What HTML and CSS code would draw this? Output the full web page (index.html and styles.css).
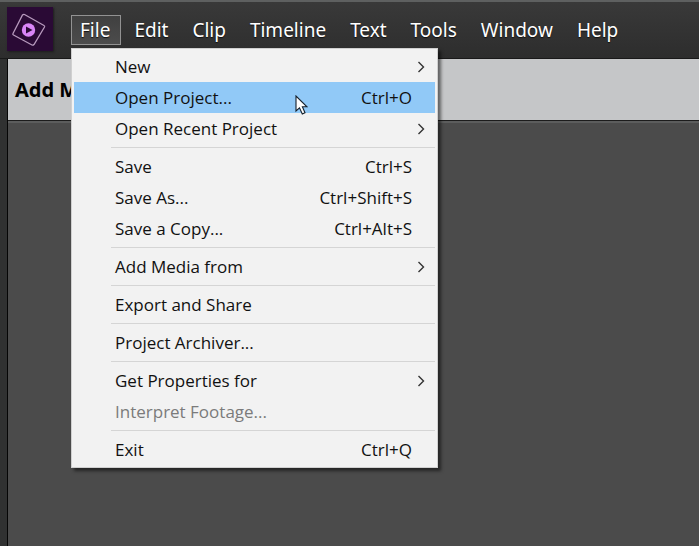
FILE: index.html
```
<!DOCTYPE html>
<html lang="en">
<head>
  <meta charset="UTF-8">
  <title>File menu</title>
  <link rel="stylesheet" href="styles.css">
</head>
<body>

<header class="topbar">
  <svg class="logo" viewBox="0 0 46 44" aria-hidden="true">
    <path d="M17.5 7.5L37 18.5Q38 19 37.5 20L27 37.5Q26 38.5 25 38L6.500 28Q5.500 27.500 6 26.500L15.500 8Q16.500 7 17.500 7.500Z" fill="none" stroke="#b79abd" stroke-width="1.300"/>
    <circle cx="21.500" cy="23" r="6.700" fill="#d985f7"/>
    <path d="M19 19.500L25.500 23L19 26.500Z" fill="#2a0a35"/>
  </svg>
  <nav class="menubar">
    <div class="menu-wrap">
      <button class="menu-title open">File</button>
      <!-- File drop-down -->
      <div class="menu">
        <button class="item"><span>New</span><svg class="arrow" viewBox="0 0 8 12"><path d="M1.500 1L6.500 6L1.500 11"/></svg></button>
        <button class="item active"><span>Open Project...</span><span>Ctrl+O</span></button>
        <button class="item"><span>Open Recent Project</span><svg class="arrow" viewBox="0 0 8 12"><path d="M1.500 1L6.500 6L1.500 11"/></svg></button>
        <hr class="line">
        <button class="item"><span>Save</span><span>Ctrl+S</span></button>
        <button class="item"><span>Save As...</span><span>Ctrl+Shift+S</span></button>
        <button class="item"><span>Save a Copy...</span><span>Ctrl+Alt+S</span></button>
        <hr class="line">
        <button class="item"><span>Add Media from</span><svg class="arrow" viewBox="0 0 8 12"><path d="M1.500 1L6.500 6L1.500 11"/></svg></button>
        <hr class="line">
        <button class="item"><span>Export and Share</span></button>
        <hr class="line">
        <button class="item"><span>Project Archiver...</span></button>
        <hr class="line">
        <button class="item"><span>Get Properties for</span><svg class="arrow" viewBox="0 0 8 12"><path d="M1.500 1L6.500 6L1.500 11"/></svg></button>
        <button class="item" disabled><span>Interpret Footage...</span></button>
        <hr class="line">
        <button class="item"><span>Exit</span><span>Ctrl+Q</span></button>
        <svg class="cursor" viewBox="0 0 13 20" aria-hidden="true"><path d="M1 1V16L4.500 12.800L7.300 19L10 17.800L7.400 11.800H12Z" fill="#fff" stroke="#16202c" stroke-width="1.100"/></svg>
      </div>
    </div>
    <button class="menu-title">Edit</button>
    <button class="menu-title">Clip</button>
    <button class="menu-title">Timeline</button>
    <button class="menu-title">Text</button>
    <button class="menu-title">Tools</button>
    <button class="menu-title">Window</button>
    <button class="menu-title">Help</button>
  </nav>
</header>

<main class="workspace">
  <div class="panel-bar">
    <button class="add-media">Add Media</button>
  </div>
</main>

</body>
</html>
```
FILE: styles.css
```
* {
  box-sizing: border-box;
}
body {
  margin: 0;
  min-height: 100vh;
  display: flex;
  flex-direction: column;
  background: #303131;
  font-family: "Open Sans", "Noto Sans", sans-serif;
}
button {
  margin: 0;
  padding: 0;
  border: none;
  background: none;
  font-family: inherit;
}
.topbar {
  display: flex;
  align-items: flex-start;
  height: 59px;
  padding: 5px 7px 0;
  border-top: 2px solid #5e6060;
  border-bottom: 1px solid #191919;
  background: linear-gradient(#393939, #2d2d2d);
}
.logo {
  width: 46px;
  height: 44px;
  margin-right: 18px;
  background: #2a0a35;
  box-shadow: 1px 1px 2px #1c1c1c;
}
.menubar {
  display: flex;
  gap: 4px;
  padding-top: 8px;
}
.menu-wrap {
  position: relative;
}
.menu-title {
  display: block;
  height: 30px;
  padding: 0 10px 0 8px;
  border: 1px solid transparent;
  color: #fff;
  font-family: "Noto Sans", sans-serif;
  font-size: 19px;
  line-height: 28px;
  text-shadow: 0 1px 1px #111;
}
.menu-title.open {
  border-color: #929292;
  background: linear-gradient(#404040, #4c4c4c);
}
.menu {
  position: absolute;
  top: 33px;
  left: 0;
  z-index: 10;
  width: 367px;
  padding: 2px;
  border: 1px solid #d0d0d0;
  background: #f2f2f2;
  box-shadow: 3px 3px 3px rgba(0,0,0,0.5);
}
.item {
  display: flex;
  justify-content: space-between;
  align-items: center;
  width: 100%;
  height: 31px;
  padding: 1px 23px 0 41px;
  color: #111;
  font-size: 17px;
  line-height: 30px;
}
.item.active {
  background: #91c9f7;
}
.item:disabled {
  color: #7b7b7b;
}
.line {
  height: 1px;
  margin: 3px 0 3px 37px;
  border: none;
  background: #d5d5d5;
}
.arrow {
  width: 8px;
  height: 12px;
  margin-right: -13px;
  fill: none;
  stroke: #333;
  stroke-width: 1.4;
}
.cursor {
  position: absolute;
  top: 46px;
  left: 223px;
  width: 13px;
  height: 20px;
}
.workspace {
  flex: 1;
  margin-left: 7px;
  border-left: 1px solid #050505;
  background: #4b4b4b;
}
.panel-bar {
  height: 64px;
  border-bottom: 2px solid #5c5d5d;
  background: #c5c6c8;
  box-shadow: inset 0 -1px 0 #1c1c1c;
}
.add-media {
  height: 61px;
  padding: 0 7px;
  color: #000;
  font-family: "Noto Sans", sans-serif;
  font-size: 20px;
  font-weight: bold;
}
```
